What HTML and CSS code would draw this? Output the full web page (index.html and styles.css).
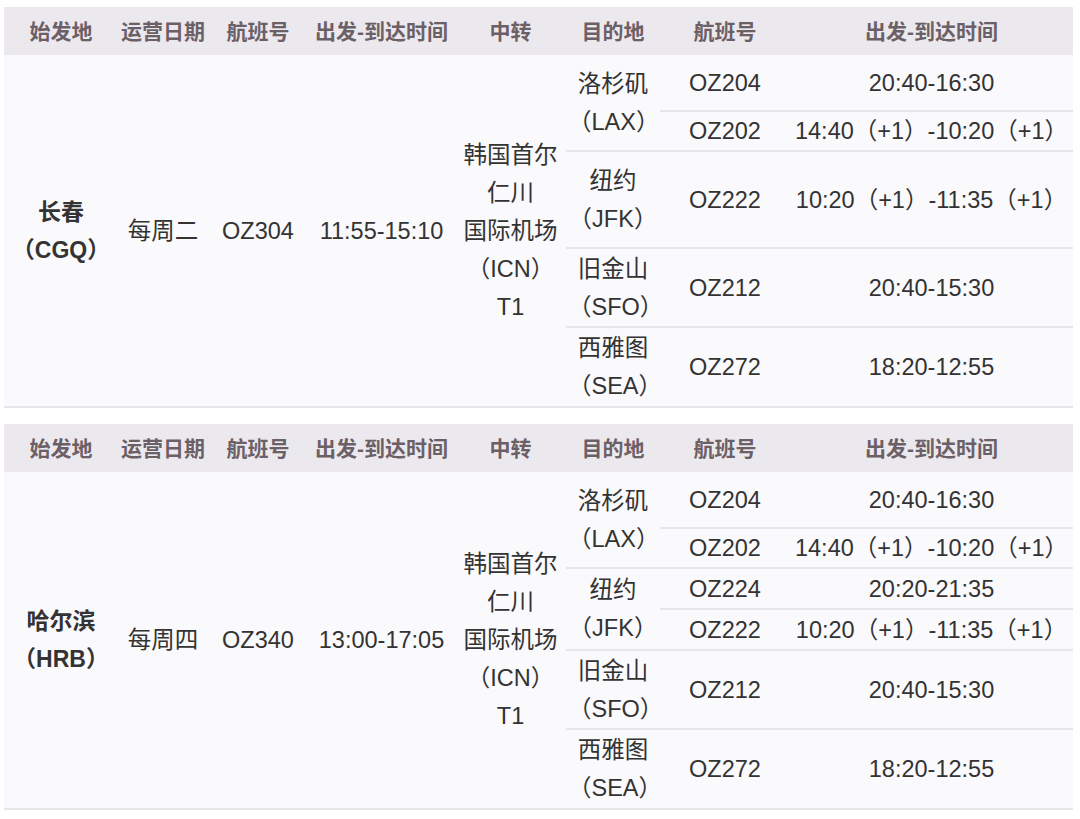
FILE: index.html
```html
<!DOCTYPE html>
<html lang="zh-CN">
<head>
<meta charset="utf-8">
<title>航班时刻表</title>
<link rel="stylesheet" href="styles.css">
</head>
<body>
<div class="page">
  <table class="sched">
    <colgroup>
      <col class="c1"><col class="c2"><col class="c3"><col class="c4"><col class="c5"><col class="c6"><col class="c7"><col class="c8">
    </colgroup>
    <thead>
      <tr class="head"><th>始发地</th><th>运营日期</th><th>航班号</th><th>出发-到达时间</th><th>中转</th><th>目的地</th><th>航班号</th><th>出发-到达时间</th></tr>
    </thead>
    <tbody>
      <tr class="h57">
        <td rowspan="5" class="origin">长春<br>（CGQ）</td>
        <td rowspan="5">每周二</td>
        <td rowspan="5">OZ304</td>
        <td rowspan="5">11:55-15:10</td>
        <td rowspan="5">韩国首尔<br>仁川<br>国际机场<br>（ICN）<br>T1</td>
        <td rowspan="2">洛杉矶<br>（LAX）</td>
        <td>OZ204</td><td>20:40-16:30</td>
      </tr>
      <tr class="h40"><td>OZ202</td><td>14:40（+1）-10:20（+1）</td></tr>
      <tr class="h97"><td>纽约<br>（JFK）</td><td>OZ222</td><td>10:20（+1）-11:35（+1）</td></tr>
      <tr class="h79"><td>旧金山<br>（SFO）</td><td>OZ212</td><td>20:40-15:30</td></tr>
      <tr class="h80"><td>西雅图<br>（SEA）</td><td>OZ272</td><td>18:20-12:55</td></tr>
    </tbody>
  </table>

  <table class="sched">
    <colgroup>
      <col class="c1"><col class="c2"><col class="c3"><col class="c4"><col class="c5"><col class="c6"><col class="c7"><col class="c8">
    </colgroup>
    <thead>
      <tr class="head"><th>始发地</th><th>运营日期</th><th>航班号</th><th>出发-到达时间</th><th>中转</th><th>目的地</th><th>航班号</th><th>出发-到达时间</th></tr>
    </thead>
    <tbody>
      <tr class="h57">
        <td rowspan="6" class="origin">哈尔滨<br>（HRB）</td>
        <td rowspan="6">每周四</td>
        <td rowspan="6">OZ340</td>
        <td rowspan="6">13:00-17:05</td>
        <td rowspan="6">韩国首尔<br>仁川<br>国际机场<br>（ICN）<br>T1</td>
        <td rowspan="2">洛杉矶<br>（LAX）</td>
        <td>OZ204</td><td>20:40-16:30</td>
      </tr>
      <tr class="h40"><td>OZ202</td><td>14:40（+1）-10:20（+1）</td></tr>
      <tr class="h41"><td rowspan="2">纽约<br>（JFK）</td><td>OZ224</td><td>20:20-21:35</td></tr>
      <tr class="h41"><td>OZ222</td><td>10:20（+1）-11:35（+1）</td></tr>
      <tr class="h79"><td>旧金山<br>（SFO）</td><td>OZ212</td><td>20:40-15:30</td></tr>
      <tr class="h80"><td>西雅图<br>（SEA）</td><td>OZ272</td><td>18:20-12:55</td></tr>
    </tbody>
  </table>
</div>
</body>
</html>
```

FILE: styles.css
```css
html, body {
  margin: 0;
  padding: 0;
  background: #ffffff;
}

.page {
  padding: 7px 7px 0 4px;
  display: flex;
  flex-direction: column;
  gap: 16px;
}

.sched {
  width: 1069px;
  table-layout: fixed;
  border-collapse: separate;
  border-spacing: 0;
  font-family: "Liberation Sans", "Noto Sans CJK SC", sans-serif;
  color: #333333;
  background: #faf9fc;
}

.c1 { width: 114px; }
.c2 { width: 90px; }
.c3 { width: 100px; }
.c4 { width: 147px; }
.c5 { width: 111px; }
.c6 { width: 94px; }
.c7 { width: 130px; }
.c8 { width: 283px; }

.head {
  height: 48px;
  background: #ece9ee;
}

.head th {
  font-size: 21px;
  font-weight: bold;
  color: #6c6067;
  padding: 0 0 3px;
  text-align: center;
  vertical-align: middle;
  white-space: nowrap;
}

.sched td {
  font-size: 23.5px;
  line-height: 38px;
  text-align: center;
  vertical-align: middle;
  padding: 0 2px;
  white-space: nowrap;
  border-bottom: 2px solid #e8e5ea;
}

.sched td.origin {
  font-weight: bold;
  font-size: 23px;
}

.h57 { height: 57px; }
.h40 { height: 40px; }
.h41 { height: 41px; }
.h97 { height: 97px; }
.h79 { height: 79px; }
.h80 { height: 80px; }
```
